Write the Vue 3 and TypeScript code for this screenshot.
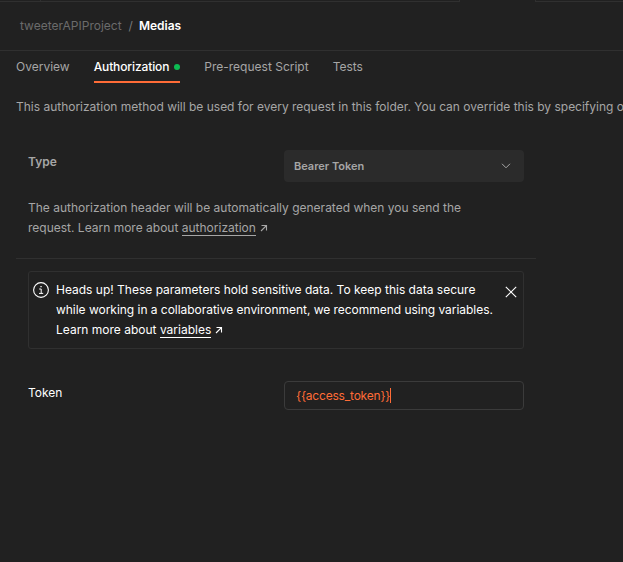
<script setup lang="ts">
import { ref } from 'vue'

interface Tab {
  label: string
  changed?: boolean
}

const tabs: Tab[] = [
  { label: 'Overview' },
  { label: 'Authorization', changed: true },
  { label: 'Pre-request Script' },
  { label: 'Tests' },
]
const active = ref('Authorization')
const noticeOpen = ref(true)
const token = '{{access_token}}'
</script>

<template>
  <div class="page">
    <div class="tabstrip">
      <span class="strip left"><i class="tick"></i></span>
      <span class="strip gap"></span>
      <span class="strip right"></span>
    </div>

    <header class="crumbs">
      <span class="parent">tweeterAPIProject</span>
      <span class="slash">/</span>
      <span class="current">Medias</span>
    </header>

    <nav class="tabs">
      <a
        v-for="tab in tabs"
        :key="tab.label"
        class="tab"
        :class="{ active: tab.label === active }"
        @click="active = tab.label"
      >
        <span>{{ tab.label }}</span><i v-if="tab.changed" class="dot"></i>
      </a>
    </nav>

    <p class="intro">This authorization method will be used for every request in this folder. You can override this by specifying one in the request.</p>

    <section class="type">
      <div class="row">
        <label class="label bold">Type</label>
        <div class="select">
          <span>Bearer Token</span>
          <svg width="10" height="6" viewBox="0 0 10 6"><path d="M1 .8l4 4 4-4" fill="none" stroke="currentColor" /></svg>
        </div>
      </div>
      <p class="help">
        The authorization header will be automatically generated when you send the request. Learn more about
        <a class="link">authorization</a><svg class="ext" width="8" height="8" viewBox="0 0 8 8"><path d="M1.5 1.5h5v5M6.5 1.5L1 7" fill="none" stroke="currentColor" stroke-width="1.1" /></svg>
      </p>
    </section>

    <section class="params">
      <div v-if="noticeOpen" class="notice">
        <svg class="info" width="16" height="16" viewBox="0 0 16 16">
          <circle cx="8" cy="8" r="7.4" fill="none" stroke="currentColor" stroke-width="1.1" />
          <path d="M6.2 7h2v4.4M6 11.4h4.2" fill="none" stroke="currentColor" />
          <path d="M7.4 4h1.3v1.3H7.4z" fill="currentColor" />
        </svg>
        <p class="message">
          Heads up! These parameters hold sensitive data. To keep this data secure <span class="tight">while working in a collaborative environment, we recommend using variables.</span> Learn more about
          <a class="link">variables</a><svg class="ext" width="8" height="8" viewBox="0 0 8 8"><path d="M1.5 1.5h5v5M6.5 1.5L1 7" fill="none" stroke="currentColor" stroke-width="1.1" /></svg>
        </p>
        <svg class="close" width="12" height="12" viewBox="0 0 12 12" @click="noticeOpen = false">
          <path d="M.8.8l10.4 10.4M11.2.8L.8 11.2" fill="none" stroke="currentColor" stroke-width="1.1" />
        </svg>
      </div>
      <div class="row token-row">
        <label class="label light">Token</label>
        <div class="input"><span>{{ token }}</span><i class="caret"></i></div>
      </div>
    </section>
  </div>
</template>

<style>
body {
  background: #212121;
}
</style>

<style scoped>
.page {
  box-sizing: border-box;
  width: 100%;
  height: 562px;
  overflow: hidden;
  background: #212121;
  color: #a6a6a6;
  font: 12px/20px Inter, sans-serif;
}
p {
  margin: 0;
}
.tabstrip {
  display: flex;
  height: 2px;
}
.strip {
  box-sizing: border-box;
  border-bottom: 1px solid #303030;
}
.left {
  width: 460px;
  border-right: 1px solid #303030;
}
.tick {
  display: block;
  width: 1px;
  height: 1px;
  margin-left: 40px;
  background: #303030;
}
.gap {
  width: 75px;
  border-color: transparent;
}
.right {
  flex: 1;
  border-left: 1px solid #303030;
}
.crumbs {
  display: flex;
  box-sizing: border-box;
  height: 49px;
  padding: 14px 20px 0;
  border-bottom: 1px solid #303030;
}
.parent {
  color: #6b6b6b;
}
.slash {
  margin: 0 6px 0 7px;
  color: #7a7a7a;
}
.current {
  color: #fff;
  font-weight: 600;
}
.tabs {
  display: flex;
  gap: 24px;
  height: 32px;
  padding-left: 16px;
}
.tab {
  display: flex;
  box-sizing: border-box;
  height: 32px;
  padding-top: 6px;
}
.tab.active {
  border-bottom: 2px solid #ff6c37;
  color: #fff;
  font-weight: 500;
  letter-spacing: -0.12px;
}
.dot {
  width: 6px;
  height: 6px;
  margin: 7px 0 0 5px;
  border-radius: 50%;
  background: #0cbb52;
}
.intro {
  padding: 14px 0 0 16px;
  letter-spacing: -0.01px;
  white-space: nowrap;
}
.type {
  box-sizing: border-box;
  width: 520px;
  height: 142px;
  margin-left: 16px;
  padding: 33px 12px 0;
  border-bottom: 1px solid #303030;
}
.row {
  display: flex;
}
.label {
  width: 256px;
}
.bold {
  padding-top: 2px;
  font-weight: 600;
}
.light {
  padding-top: 2px;
  color: #fff;
}
.select {
  display: flex;
  box-sizing: border-box;
  align-items: center;
  justify-content: space-between;
  width: 240px;
  height: 32px;
  padding: 0 13px 0 10px;
  border-radius: 4px;
  background: #2b2b2b;
  font-size: 11px;
  font-weight: 600;
}
.help {
  width: 450px;
  padding-top: 16px;
}
.tight {
  letter-spacing: -0.03px;
}
.link {
  border-bottom: 1px solid currentColor;
}
.ext {
  margin-left: 4px;
}
.params {
  width: 496px;
  padding: 12px 0 0 28px;
}
.notice {
  display: flex;
  box-sizing: border-box;
  height: 78px;
  padding: 8px 6px 0 4px;
  border: 1px solid #303030;
  border-radius: 3px;
  color: #fff;
}
.info {
  margin-top: 2px;
}
.message {
  width: 442px;
  margin-left: 7px;
}
.close {
  margin: 6px 0 0 auto;
}
.token-row {
  padding-top: 32px;
}
.input {
  display: flex;
  box-sizing: border-box;
  align-items: center;
  width: 240px;
  height: 29px;
  padding-left: 11px;
  border: 1px solid #3b3b3b;
  border-radius: 4px;
  color: #ff6c37;
  letter-spacing: -0.2px;
}
.caret {
  width: 1px;
  height: 15px;
  background: #ff6c37;
}
</style>
